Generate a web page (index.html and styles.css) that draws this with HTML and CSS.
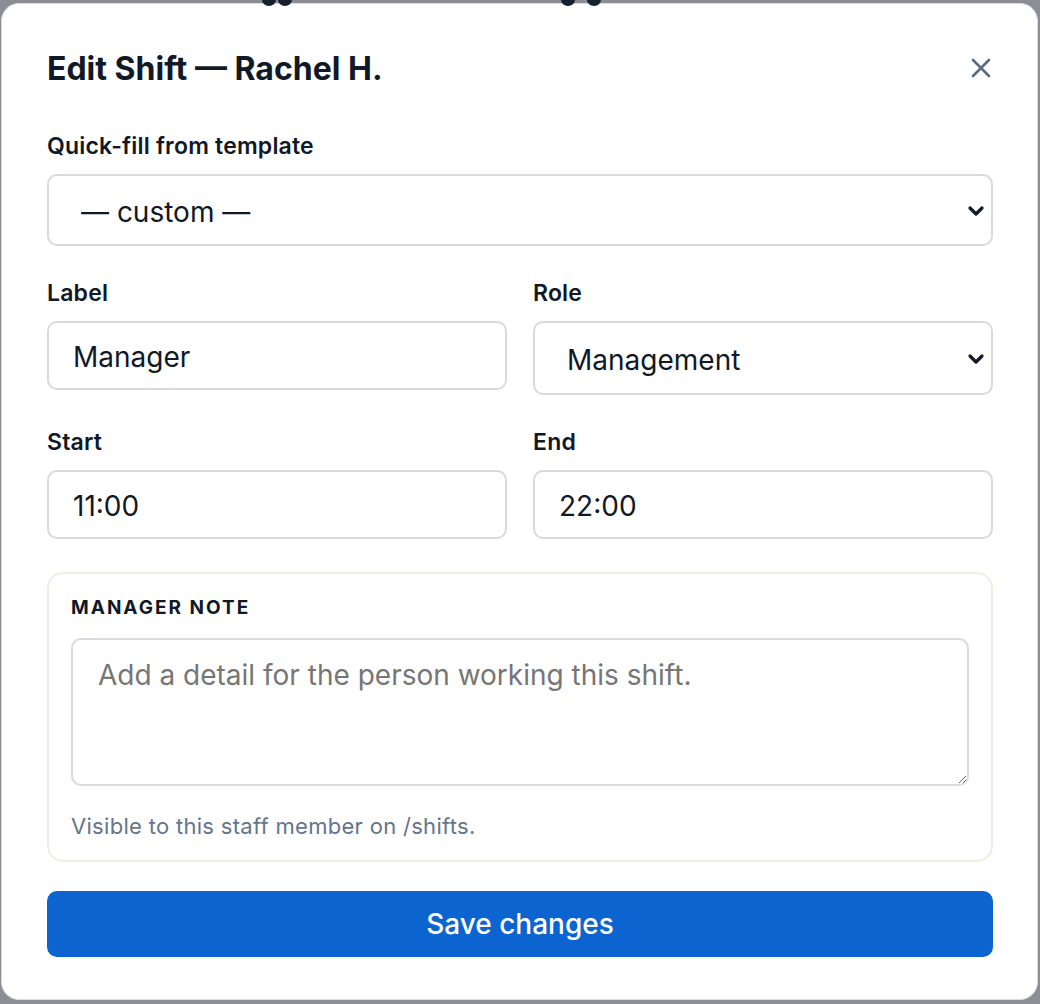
FILE: index.html
```html
<!DOCTYPE html>
<html>
<head>
  <title>Edit Shift</title>
  <link rel="stylesheet" href="styles.css">
</head>
<body>
  <div class="behind">
    <span class="blob b1"></span>
    <span class="blob b2"></span>
    <span class="blob b3"></span>
    <span class="blob b4"></span>
  </div>

  <div class="modal">
    <div class="modal-head">
      <h2>Edit Shift — Rachel H.</h2>
      <button class="close" aria-label="Close">
        <svg width="20" height="20" viewBox="0 0 20 20"><path d="M2 2 L18 18 M18 2 L2 18" stroke="#5d6b80" stroke-width="2.6" stroke-linecap="round"/></svg>
      </button>
    </div>

    <div class="field">
      <label>Quick-fill from template</label>
      <div class="select-wrap tall">
        <select><option>— custom —</option></select>
        <svg class="chev" width="18" height="12" viewBox="0 0 18 12"><path d="M3 3 L9 9 L15 3" fill="none" stroke="#111827" stroke-width="3.2" stroke-linecap="round" stroke-linejoin="round"/></svg>
      </div>
    </div>

    <div class="row">
      <div class="field">
        <label>Label</label>
        <input type="text" value="Manager">
      </div>
      <div class="field">
        <label>Role</label>
        <div class="select-wrap">
          <select><option>Management</option></select>
          <svg class="chev" width="18" height="12" viewBox="0 0 18 12"><path d="M3 3 L9 9 L15 3" fill="none" stroke="#111827" stroke-width="3.2" stroke-linecap="round" stroke-linejoin="round"/></svg>
        </div>
      </div>
    </div>

    <div class="row">
      <div class="field">
        <label>Start</label>
        <input type="text" value="11:00">
      </div>
      <div class="field">
        <label>End</label>
        <input type="text" value="22:00">
      </div>
    </div>

    <div class="note">
      <div class="note-title">MANAGER NOTE</div>
      <textarea placeholder="Add a detail for the person working this shift."></textarea>
      <div class="note-help">Visible to this staff member on /shifts.</div>
    </div>

    <button class="save">Save changes</button>
  </div>
</body>
</html>
```

FILE: styles.css
```css
body {
    margin: 0;
    height: 1004px;
    background-color: #8c8d95;
    font-family: Inter, "Noto Sans", sans-serif;
    color: #111827;
    overflow: hidden;
    }

.behind {
    height: 3px;
    position: relative;
    }

.blob {
    position: absolute;
    top: -6px;
    width: 14px;
    height: 12px;
    border-radius: 50%;
    background-color: #17202e;
    }
.b1 { left: 262px; }
.b2 { left: 278px; }
.b3 { left: 561px; }
.b4 { left: 587px; }

.modal {
    box-sizing: border-box;
    margin-left: 1px;
    width: 1037px;
    height: 997px;
    background-color: #fff;
    border: 1px solid #dcdde2;
    border-radius: 18px;
    padding: 48px 44px 0 45px;
    }

.modal-head {
    display: flex;
    justify-content: space-between;
    align-items: center;
    height: 34px;
    margin-bottom: 46px;
    }

.modal-head h2 {
    margin: 0;
    font-size: 32px;
    font-weight: 700;
    line-height: 34px;
    }

.close {
    border: none;
    background: none;
    padding: 0;
    margin-right: 2px;
    margin-top: -2px;
    width: 20px;
    height: 20px;
    cursor: pointer;
    }

.field {
    display: flex;
    flex-direction: column;
    min-width: 0;
    }

.field label {
    font-size: 23px;
    font-weight: 600;
    line-height: 28px;
    letter-spacing: 0.2px;
    margin-bottom: 14px;
    }

.row {
    display: grid;
    grid-template-columns: 1fr 1fr;
    gap: 26px;
    margin-top: 33px;
    }

input, select, textarea {
    font-family: Inter, "Noto Sans", sans-serif;
    color: #111827;
    box-sizing: border-box;
    border: 2px solid #d9dadf;
    border-radius: 10px;
    background-color: #fff;
    outline: none;
    }

input {
    width: 100%;
    height: 69px;
    font-size: 28px;
    padding: 3px 24px 0 24px;
    }

.select-wrap {
    position: relative;
    }

.select-wrap select {
    -webkit-appearance: none;
    appearance: none;
    width: 100%;
    height: 74px;
    font-size: 28px;
    padding: 3px 50px 0 32px;
    }

.select-wrap.tall select {
    height: 72px;
    }

.chev {
    position: absolute;
    right: 8px;
    top: 50%;
    margin-top: -5px;
    pointer-events: none;
    }

.note {
    margin-top: 33px;
    border: 2px solid #f3ede1;
    border-radius: 16px;
    padding: 22px 22px 20px 22px;
    }

.note-title {
    font-size: 19px;
    font-weight: 700;
    letter-spacing: 2px;
    line-height: 24px;
    margin-bottom: 18px;
    }

.note textarea {
    display: block;
    width: 100%;
    height: 148px;
    font-size: 28px;
    line-height: 34px;
    padding: 18px 25px;
    resize: vertical;
    }

.note textarea::placeholder {
    color: #767676;
    }

.note-help {
    margin-top: 26px;
    font-size: 22px;
    line-height: 28px;
    letter-spacing: 0.3px;
    color: #64748b;
    }

.save {
    display: block;
    width: 100%;
    height: 66px;
    margin-top: 29px;
    border: none;
    border-radius: 10px;
    background-color: #0b64cf;
    color: #fff;
    font-family: Inter, "Noto Sans", sans-serif;
    font-size: 28px;
    font-weight: 500;
    cursor: pointer;
    }
```
